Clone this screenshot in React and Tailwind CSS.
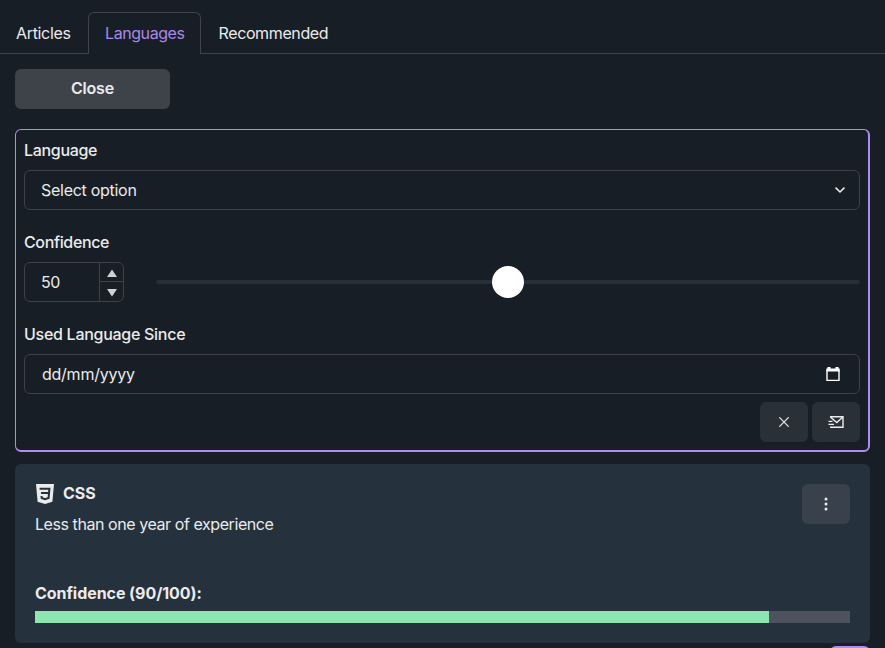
import React from "react";
import { BsThreeDotsVertical } from "react-icons/bs";

function Label({ children }) {
  return <div className="h-6 text-base leading-6 font-medium whitespace-nowrap">{children}</div>;
}

function CssLogo() {
  return (
    <svg className="h-5 w-5" viewBox="0 0 20 20">
      <path d="M1 0h18l-1.6 17.8L10 20l-7.4-2.2z" fill="currentColor" />
      <path d="M4.6 4.7h9.8l-.8 9.3L10 15.1l-3.3-1.1-.2-2M6 9h8" fill="none" stroke="#25313c" strokeWidth="2" />
    </svg>
  );
}

function SendMailIcon() {
  return (
    <svg className="-ml-px h-3 w-4" viewBox="0 0 16 12" fill="none" stroke="currentColor" strokeWidth="1.4">
      <path d="M2 .8h13v10.4H2M2.6 1.2 8.8 6.6 14.6 1.2" />
      <path d="M.5 5.4h4M.5 8.4h5.5" />
    </svg>
  );
}

function Tabs() {
  return (
    <div className="flex h-[54px] pt-3 text-base text-[#ebebec]">
      <div className="flex w-[88px] items-center border-b border-[#3f444e] pl-4 tracking-[-0.33px]">Articles</div>
      <div className="flex w-[113px] items-center rounded-t-md border border-b-0 border-[#3f444e] pb-0.5 pl-4 tracking-[-0.42px] text-[#ab88ea]">Languages</div>
      <div className="flex flex-1 items-center border-b border-[#3f444e] pl-[17.5px] tracking-[-0.38px]">Recommended</div>
    </div>
  );
}

function LanguageForm() {
  return (
    <div className="mt-5 flex h-[323px] flex-col rounded-md border border-r-2 border-b-2 border-[#b18bf0] px-2 pt-2">
      <Label><span className="tracking-[-0.32px]">Language</span></Label>
      <div className="mt-2 flex h-10 items-center justify-between rounded-md border border-[#3f4048] pr-[14px] pl-4">
        <span className="tracking-[-0.28px]">Select option</span>
        <svg className="h-[10px] w-[10px]" viewBox="0 0 10 10" fill="none" stroke="currentColor" strokeWidth="1.6">
          <path d="M0.5 2.7 5 7 9.5 2.7" />
        </svg>
      </div>
      <div className="mt-5"><Label><span className="tracking-[-0.36px]">Confidence</span></Label></div>
      <div className="mt-2 flex items-center gap-8">
        <div className="flex h-10 w-[100px] rounded-md border border-[#3f4048]">
          <div className="flex w-[74px] items-center pl-4 tracking-[-0.5px]">50</div>
          <div className="flex flex-1 flex-col border-l border-[#3f4048]">
            <div className="flex h-[19px] items-center justify-center border-b border-[#3f4048]">
              <svg className="mt-[2px] h-[8px] w-[10px] fill-[#d0d1d2]" viewBox="0 0 10 8"><path d="M0 8 5 .4 10 8z" /></svg>
            </div>
            <div className="flex h-[19px] items-center justify-center">
              <svg className="mt-[2px] h-[8px] w-[10px] fill-[#d0d1d2]" viewBox="0 0 10 8"><path d="M0 0 5 7.6 10 0z" /></svg>
            </div>
          </div>
        </div>
        <div className="flex h-8 w-[704px] items-center">
          <div className="h-1 flex-1 rounded-l-sm bg-[#292f37]" />
          <div className="h-8 w-8 rounded-full bg-white" />
          <div className="h-1 flex-1 rounded-r-sm bg-[#292f37]" />
        </div>
      </div>
      <div className="mt-5"><Label><span className="tracking-[-0.28px]">Used Language Since</span></Label></div>
      <div className="mt-2 flex h-10 items-center justify-between rounded-md border border-[#3f4048] pr-[19px] pl-[17px]">
        <span className="tracking-[-0.25px]">dd/mm/yyyy</span>
        <svg className="h-[15px] w-[14px]" viewBox="0 0 14 15" fill="none" stroke="#fff">
          <path d="M1 3v10.4h12V3" strokeWidth="1.4" />
          <path d="M0.3 3h13.4M3 0v2M11 0v2" strokeWidth="3" />
        </svg>
      </div>
      <div className="mt-2 flex justify-end gap-1">
        <button className="flex h-10 w-12 items-center justify-center rounded-md bg-[#2a3038]">
          <svg className="h-[10px] w-[10px]" viewBox="0 0 10 10" stroke="currentColor" strokeWidth="1.2"><path d="M0.3 0.3 9.7 9.7M9.7 0.3 0.3 9.7" /></svg>
        </button>
        <button className="flex h-10 w-12 items-center justify-center rounded-md bg-[#2a3038]">
          <SendMailIcon />
        </button>
      </div>
    </div>
  );
}

function LanguageCard() {
  return (
    <div className="mt-3 h-[179px] rounded-md bg-[#25313c] px-5 pt-5">
      <div className="flex justify-between">
        <div>
          <div className="flex h-5 items-center gap-2">
            <CssLogo />
            <span className="pb-0.5 text-base font-bold">CSS</span>
          </div>
          <div className="mt-2 text-base leading-6 tracking-[-0.43px]">Less than one year of experience</div>
        </div>
        <button className="flex h-10 w-12 items-center justify-center rounded-md bg-[#38414c]">
          <BsThreeDotsVertical size={16} />
        </button>
      </div>
      <div className="mt-[45px] leading-6 font-bold tracking-[-0.06px]">Confidence (90/100):</div>
      <div className="mt-[6px] h-3 bg-[#4c535f]">
        <div className="h-3 w-[734px] bg-[#8de5b0]" />
      </div>
    </div>
  );
}

export default function App() {
  return (
    <div className="h-[648px] w-[885px] overflow-hidden bg-[#181e25] font-['Inter','Liberation_Sans',sans-serif] text-base text-[#ebebec]">
      <Tabs />
      <div className="px-[15px] pt-[15px]">
        <button className="block h-10 w-[155px] rounded-md bg-[#3e4349] pb-0.5 font-semibold tracking-[-0.2px]">Close</button>
        <LanguageForm />
        <LanguageCard />
        <div className="mt-[3px] ml-auto h-10 w-10 rounded-md bg-[#b18bf0]" />
      </div>
    </div>
  );
}
